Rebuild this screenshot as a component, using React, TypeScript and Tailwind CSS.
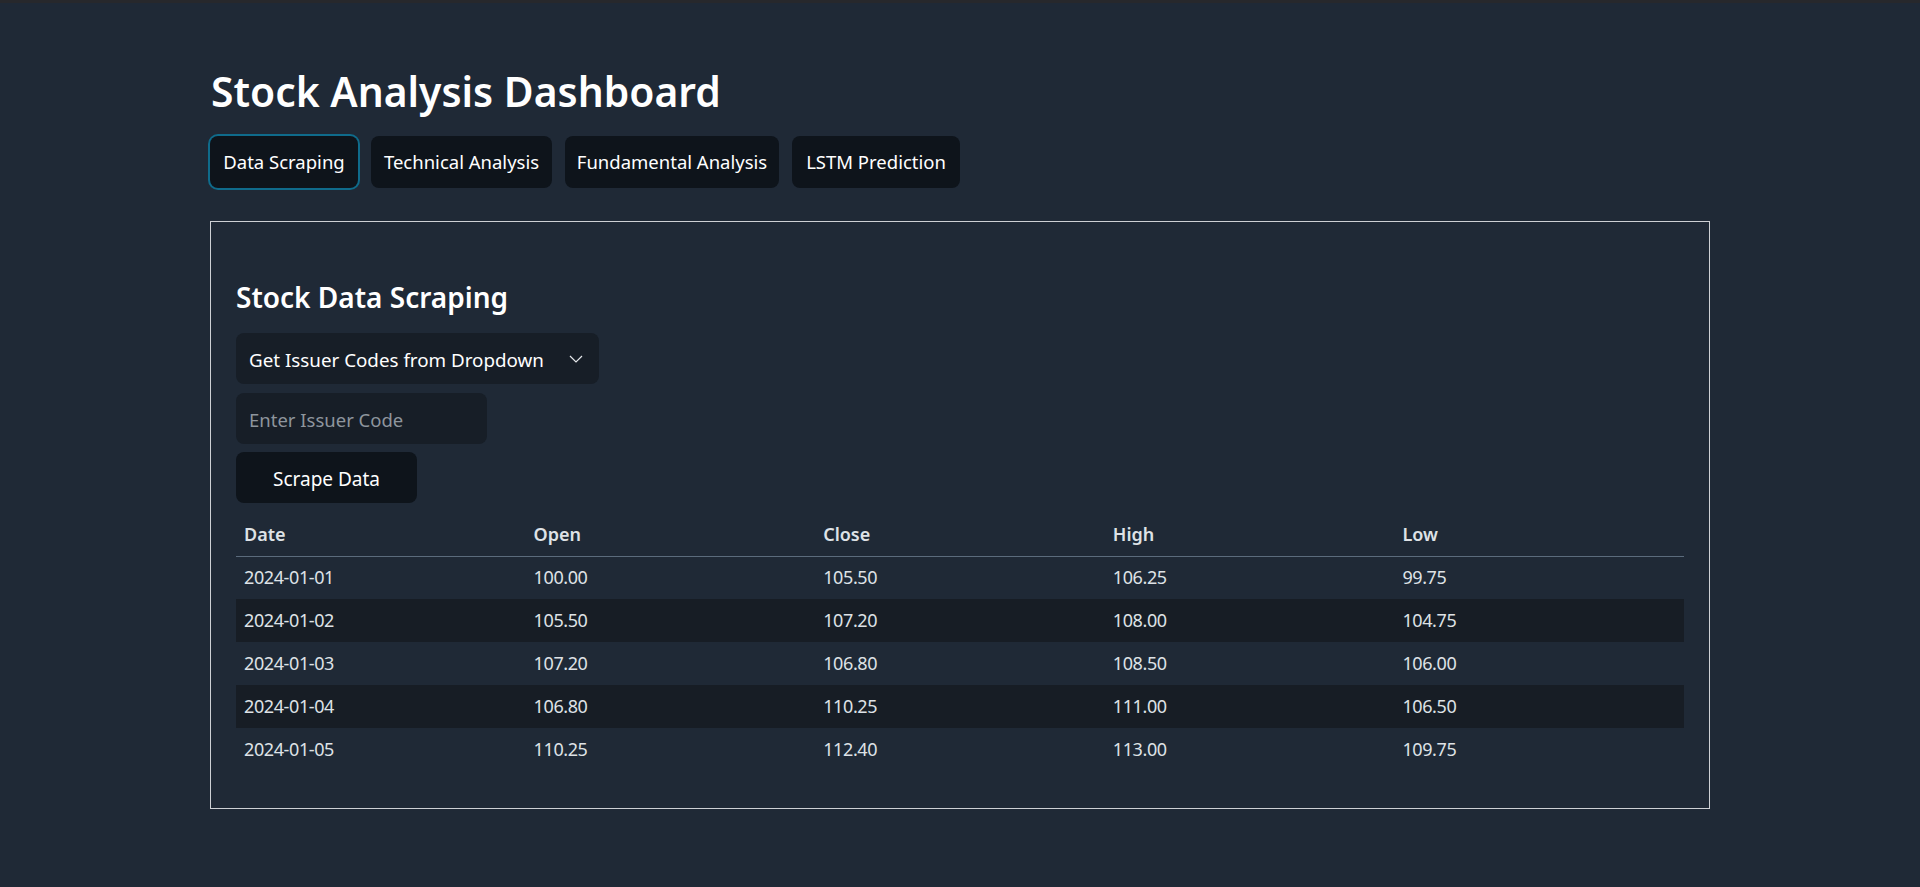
import React from "react";

const rows = [
  ["2024-01-01", "100.00", "105.50", "106.25", "99.75"],
  ["2024-01-02", "105.50", "107.20", "108.00", "104.75"],
  ["2024-01-03", "107.20", "106.80", "108.50", "106.00"],
  ["2024-01-04", "106.80", "110.25", "111.00", "106.50"],
  ["2024-01-05", "110.25", "112.40", "113.00", "109.75"],
];

export default function App() {
  return (
    <div className="min-h-screen bg-[#1f2936] font-['Noto_Sans',sans-serif] text-white">
      <div className="h-[3px] bg-[#27282c]" />
      <div className="mx-auto w-[1500px] pt-[64px]">
        <h1 className="pl-[1px] text-[40.8px] font-semibold leading-[48px]">
          Stock Analysis Dashboard
        </h1>
        <div className="mt-[21px] flex gap-[13px] text-[18.5px]">
          <button className="h-[52px] w-[148px] rounded-lg bg-[#0e141b] text-center text-white ring-2 ring-[#0f6b8b]">
            Data Scraping
          </button>
          <button className="h-[52px] w-[181px] rounded-lg bg-[#0e141b] text-center text-white">
            Technical Analysis
          </button>
          <button className="h-[52px] w-[214px] rounded-lg bg-[#0e141b] text-center text-white">
            Fundamental Analysis
          </button>
          <button className="h-[52px] w-[168px] rounded-lg bg-[#0e141b] text-center text-white">
            LSTM Prediction
          </button>
        </div>
        <div className="mt-[33px] border border-[#cdd0d4] px-[25px] pt-[25px] pb-[37px]">
          <h2 className="mt-[33px] text-[28px] font-semibold leading-[34px]">
            Stock Data Scraping
          </h2>
          <div className="mt-[19px] flex flex-col items-start gap-[8px]">
            <div className="flex h-[51px] w-[363px] items-center justify-between rounded-lg bg-[#171e27] pt-[4px] pl-[13px] pr-[16px] text-[18.8px]">
              <span>Get Issuer Codes from Dropdown</span>
              <svg width="14" height="8" viewBox="0 0 14 8" fill="none" className="-mt-[4px]">
                <path d="M1 1l6 6 6-6" stroke="#e5e7eb" strokeWidth="1.2" />
              </svg>
            </div>
            <input
              className="mt-[1px] h-[51px] w-[251px] rounded-lg bg-[#171e27] px-[13px] pt-[2px] text-[18.5px] text-white outline-none placeholder:text-[#8e959d]"
              placeholder="Enter Issuer Code"
            />
            <button className="h-[51px] w-[181px] rounded-lg bg-[#0e141b] pt-[4px] text-center text-[19px] text-white">
              Scrape Data
            </button>
          </div>
          <table className="mt-[10px] w-full table-fixed border-collapse text-left text-[18px] text-[#dee2e6]">
            <thead>
              <tr className="h-[43px] border-b border-[#5b6b7c]">
                {["Date", "Open", "Close", "High", "Low"].map((h) => (
                  <th key={h} className="px-[8px] font-semibold">
                    {h}
                  </th>
                ))}
              </tr>
            </thead>
            <tbody>
              {rows.map((r, i) => (
                <tr key={r[0]} className={i % 2 === 1 ? "h-[43px] bg-[#171d25]" : "h-[43px]"}>
                  {r.map((c, j) => (
                    <td key={j} className="px-[8px] tracking-[-0.4px]">
                      {c}
                    </td>
                  ))}
                </tr>
              ))}
            </tbody>
          </table>
        </div>
      </div>
    </div>
  );
}
